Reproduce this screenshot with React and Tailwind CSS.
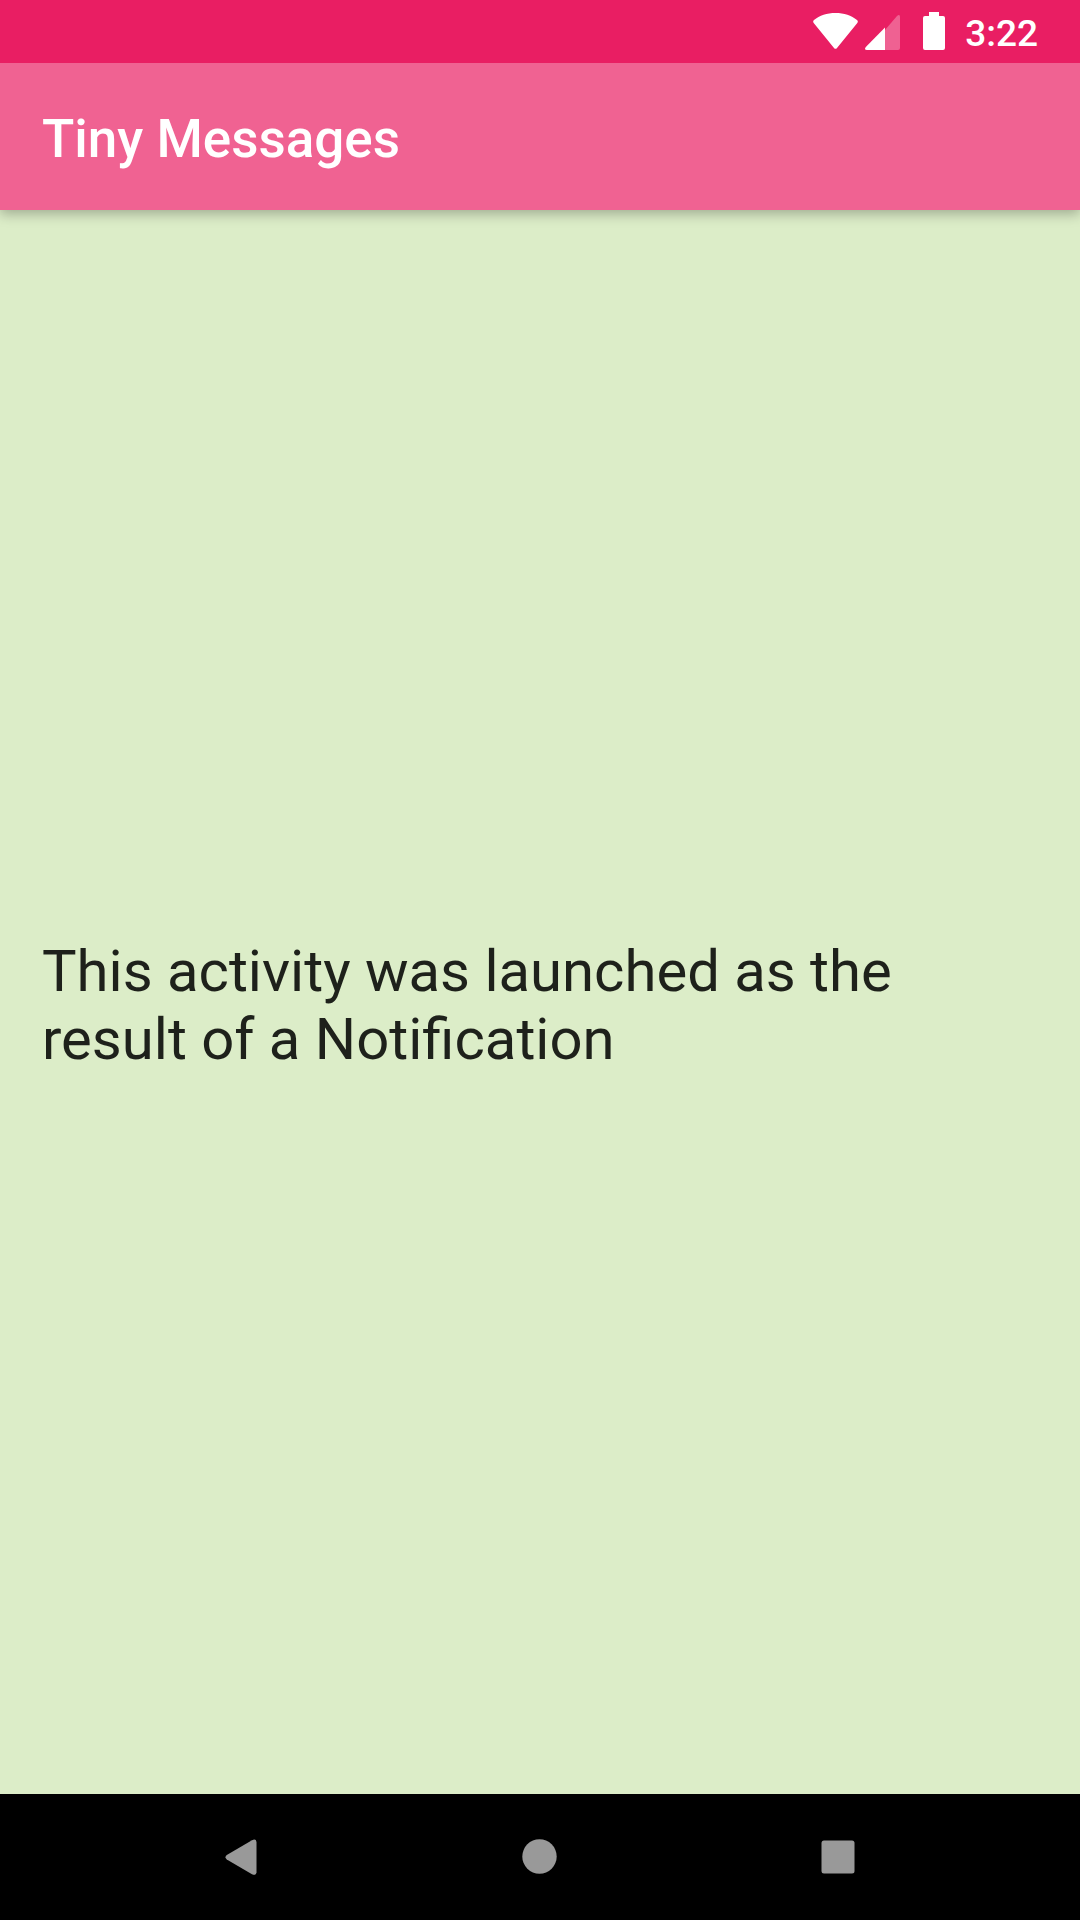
import React from "react";

function StatusBar() {
  return (
    <div className="relative z-10 flex h-[63px] shrink-0 items-end justify-end bg-[#e91e63] pr-[42px] pb-[13px] text-white">
      <svg className="mr-[7px] h-[37px] w-[45px]" viewBox="0 0 45 37" fill="currentColor" role="img" aria-label="Wi-Fi">
        <path d="M1 7C6.500 2.600 14 0 22.500 0S38.500 2.600 44 7Q45.500 8.200 44.300 10L24 35Q22.500 36.700 21 35L.7 10Q-.5 8.200 1 7Z" />
      </svg>
      <svg className="mr-[23px] h-[35px] w-[35px]" viewBox="0 0 35 35" fill="currentColor" role="img" aria-label="Mobile signal">
        <path d="M20 15L32 .9Q35-1.300 35 2V33Q35 35 33 35H20Z" fillOpacity=".3" />
        <path d="M20 12.500V35H2Q-1.300 35 .8 32.100Z" />
      </svg>
      <svg className="mr-5 h-[38px] w-[22px]" viewBox="0 0 22 38" fill="currentColor" role="img" aria-label="Battery full">
        <path d="M6 0H16V4H20Q22 4 22 6V36Q22 38 20 38H2Q0 38 0 36V6Q0 4 2 4H6Z" />
      </svg>
      <time className="text-[37px] leading-[32px] font-medium">3:22</time>
    </div>
  );
}

function NavBar() {
  const button = "flex h-[126px] w-[298px] items-center justify-center";
  return (
    <nav className="flex h-[126px] shrink-0 justify-center bg-black text-[#999]">
      <button type="button" aria-label="Back" className={button}>
        <svg className="h-9 w-[34px]" viewBox="0 0 34 36" fill="currentColor">
          <path d="M27 1.200L1.800 16.100Q-.8 18.300 1.800 20.500L27 35.200Q31 37 31.500 33.500V3Q31-.8 27 1.200Z" />
        </svg>
      </button>
      <button type="button" aria-label="Home" className={button}>
        <svg className="h-9 w-9" viewBox="0 0 36 36" fill="currentColor">
          <circle cx="17.500" cy="17.500" r="17.200" />
        </svg>
      </button>
      <button type="button" aria-label="Overview" className={button}>
        <svg className="h-9 w-9" viewBox="0 0 36 36" fill="currentColor">
          <rect x="1.500" y="1.500" width="33" height="33" rx="2.500" />
        </svg>
      </button>
    </nav>
  );
}

export default function App() {
  return (
    <div className="flex min-h-screen flex-col bg-[#dcedc8] font-['Roboto',sans-serif]">
      <StatusBar />
      <header className="flex h-[147px] shrink-0 items-center bg-[#f06292] px-[42px] pt-1 shadow-[0_4px_12px_rgba(0,0,0,0.28)]">
        <h1 className="text-[53px] leading-[62px] font-medium text-white">Tiny Messages</h1>
      </header>
      <main className="flex grow items-center px-[42px] pt-[6px]">
        <p className="text-[58px] leading-[68px] text-[#1e211b]">This activity was launched as the result of a Notification</p>
      </main>
      <NavBar />
    </div>
  );
}
